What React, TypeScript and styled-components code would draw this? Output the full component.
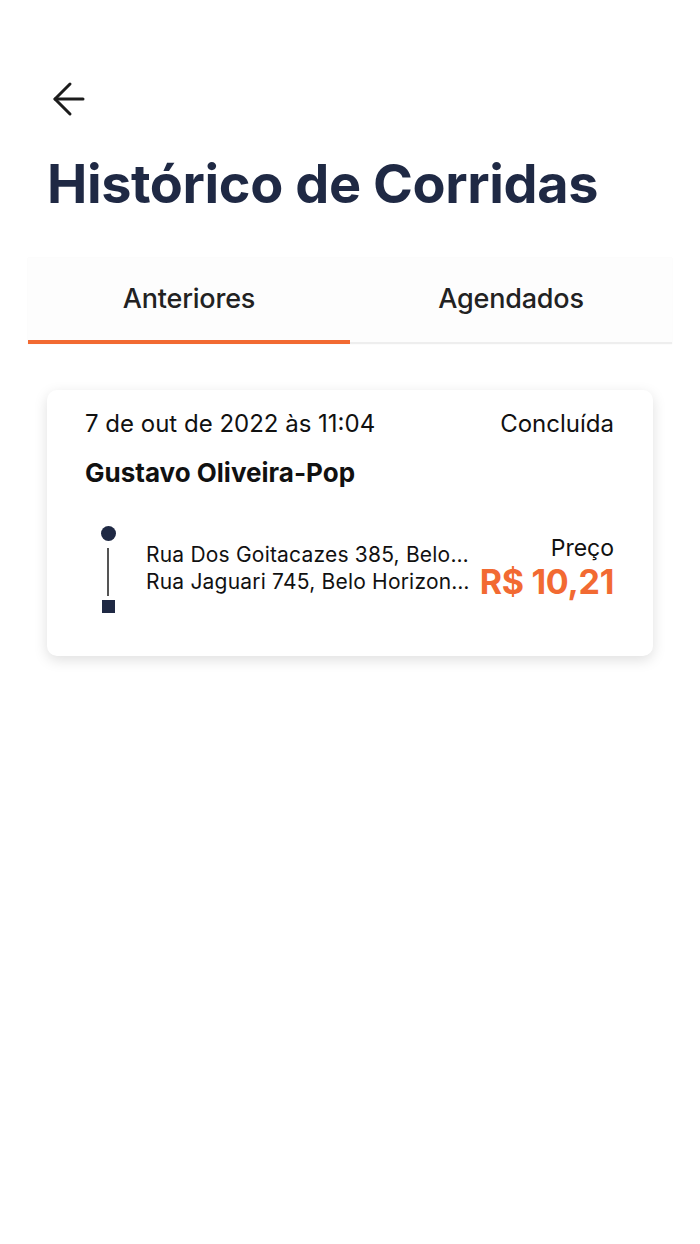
import React, { useState } from "react";
import styled, { createGlobalStyle } from "styled-components";

const GlobalStyle = createGlobalStyle`
  body {
    margin: 0;
    background: #ffffff;
    font-family: Inter, "Noto Sans", sans-serif;
  }
`;

const Screen = styled.div`
  min-height: 1244px;
  background: #ffffff;
  padding-top: 75px;
  box-sizing: border-box;
`;

const BackButton = styled.button`
  display: flex;
  align-items: center;
  justify-content: center;
  width: 48px;
  height: 48px;
  margin-left: 45px;
  padding: 0;
  border: none;
  background: none;
  color: #1c1c1c;
`;

const Title = styled.h1`
  margin: 29px 0 0 47px;
  font-size: 54px;
  font-weight: 700;
  letter-spacing: -0.4px;
  line-height: 64px;
  color: #1f2944;
`;

const Tabs = styled.div`
  display: flex;
  margin: 42px 28px 0 28px;
  background: #fdfdfd;
  box-shadow: 0 0 1px rgba(0, 0, 0, 0.08);
  border-bottom: 2px solid #eeeeee;
`;

const Tab = styled.button<{ $active?: boolean }>`
  flex: 1;
  height: 86px;
  margin-bottom: -2px;
  padding: 0 0 2px 0;
  border: none;
  border-bottom: 4px solid ${(p) => (p.$active ? "#f26a32" : "transparent")};
  background: none;
  font-family: Inter, "Noto Sans", sans-serif;
  font-size: 27px;
  font-weight: 500;
  letter-spacing: -0.2px;
  color: #222222;
`;

const List = styled.div`
  padding: 46px 47px 0 47px;
`;

const Card = styled.div`
  background: #ffffff;
  border-radius: 10px;
  box-shadow: 0 4px 14px rgba(0, 0, 0, 0.13);
  padding: 19px 39px 43px 38px;
`;

const TopRow = styled.div`
  display: flex;
  justify-content: space-between;
  align-items: center;
  font-size: 24px;
  color: #111111;
  line-height: 30px;
`;

const Driver = styled.div`
  margin-top: 19px;
  font-size: 26px;
  font-weight: 700;
  color: #111111;
  line-height: 30px;
`;

const RouteRow = styled.div`
  display: flex;
  align-items: center;
  margin-top: 38px;
`;

const RouteIcon = styled.div`
  display: flex;
  flex-direction: column;
  align-items: center;
  width: 16px;
  margin-left: 15px;
  margin-right: 30px;
`;

const Dot = styled.div`
  width: 15px;
  height: 15px;
  border-radius: 50%;
  background: #1f2944;
`;

const Stem = styled.div`
  width: 1.5px;
  height: 48px;
  margin: 7px 0 4px 0;
  background: #555555;
`;

const Square = styled.div`
  width: 13px;
  height: 13px;
  background: #1f2944;
`;

const Addresses = styled.div`
  flex: 1;
  min-width: 0;
  margin-right: 8px;
  padding-bottom: 4px;
`;

const Address = styled.div`
  max-width: 324px;
  font-size: 21px;
  letter-spacing: 0.2px;
  line-height: 27px;
  color: #111111;
  white-space: nowrap;
  overflow: hidden;
  text-overflow: ellipsis;
`;

const PriceBox = styled.div`
  display: flex;
  flex-direction: column;
  align-items: flex-end;
  flex-shrink: 0;
  padding-bottom: 4px;
`;

const PriceLabel = styled.div`
  font-size: 23px;
  line-height: 28px;
  color: #111111;
`;

const PriceValue = styled.div`
  font-size: 34px;
  font-weight: 700;
  line-height: 40px;
  letter-spacing: -0.3px;
  color: #f26a32;
`;

export default function App() {
  const [tab, setTab] = useState(0);
  return (
    <>
      <GlobalStyle />
      <Screen>
        <BackButton aria-label="Voltar">
          <svg width="48" height="48" viewBox="0 0 24 24" fill="none" stroke="currentColor" strokeWidth="1.5" strokeLinecap="round" strokeLinejoin="round">
            <path d="M19 12H5" />
            <path d="M12.5 19.5L5 12l7.5-7.5" />
          </svg>
        </BackButton>
        <Title>Histórico de Corridas</Title>
        <Tabs>
          <Tab $active={tab === 0} onClick={() => setTab(0)}>Anteriores</Tab>
          <Tab $active={tab === 1} onClick={() => setTab(1)}>Agendados</Tab>
        </Tabs>
        <List>
          <Card>
            <TopRow>
              <span>7 de out de 2022 às 11:04</span>
              <span>Concluída</span>
            </TopRow>
            <Driver>Gustavo Oliveira-Pop</Driver>
            <RouteRow>
              <RouteIcon>
                <Dot />
                <Stem />
                <Square />
              </RouteIcon>
              <Addresses>
                <Address>Rua Dos Goitacazes 385, Belo Horizonte - MG</Address>
                <Address>Rua Jaguari 745, Belo Horizonte - MG</Address>
              </Addresses>
              <PriceBox>
                <PriceLabel>Preço</PriceLabel>
                <PriceValue>R$ 10,21</PriceValue>
              </PriceBox>
            </RouteRow>
          </Card>
        </List>
      </Screen>
    </>
  );
}
